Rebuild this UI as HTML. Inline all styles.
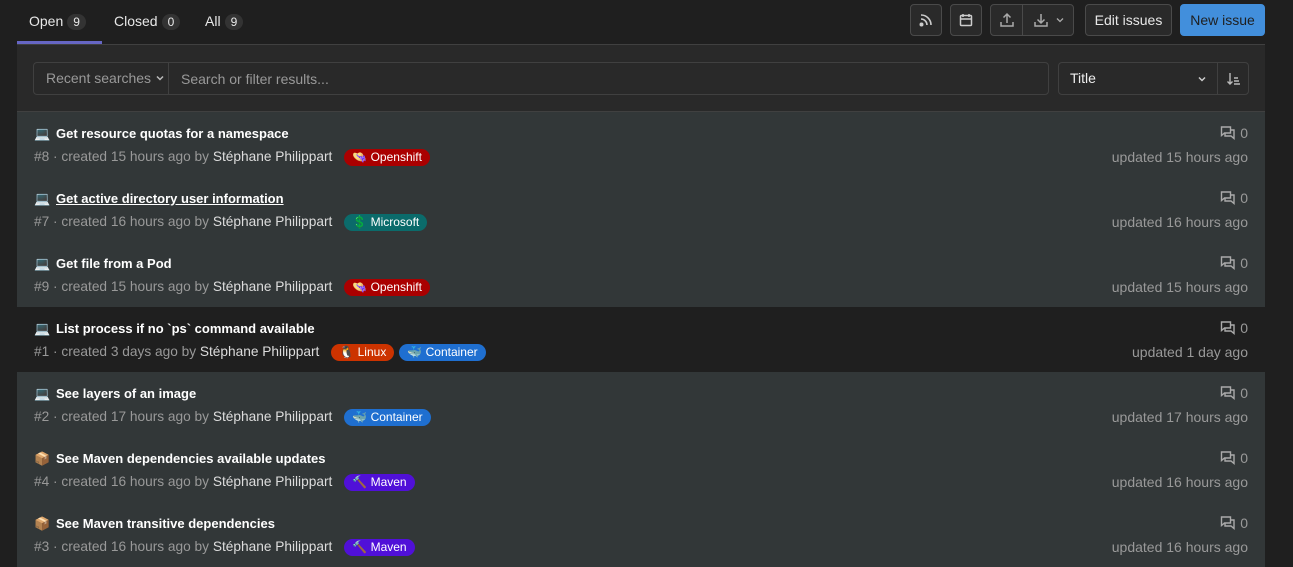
<!DOCTYPE html><html><head><meta charset="utf-8"><style>
body{margin:0;background:#1f1f1f;font-family:"Liberation Sans",sans-serif;width:1293px;height:561px;overflow:hidden;color:#fff}
.wrap{position:absolute;left:17px;width:1248px;top:0}
.tabs{height:44px;border-bottom:1px solid #404040;position:relative}
.tab{position:absolute;top:13px;font-size:14px;color:#e8e8e8}
.cnt{display:inline-block;background:#333;border-radius:10px;padding:1px 6px;font-size:12px;margin-left:4px}
.ul{position:absolute;left:0;top:41px;width:85px;height:3px;background:#6666c4}
.btn{position:absolute;top:4px;height:32px;border:1px solid #4a4a4a;border-radius:4px;background:#2a2a2a;box-sizing:border-box;display:flex;align-items:center;justify-content:center;font-size:14px;color:#e8e8e8}
.filter{height:66px;background:#292929;border-bottom:1px solid #404040;position:relative}
.fbox{position:absolute;top:17px;height:33px;border:1px solid #404040;border-radius:4px;box-sizing:border-box;font-size:14px;color:#999;display:flex;align-items:center}
.row{height:65px;background:#323738;position:relative}
.row.d{background:#1f1f1f}
.t{position:absolute;left:17px;top:14px;font-size:13px;font-weight:bold}
.t i{font-style:normal;display:inline-block;width:22px}
.m{position:absolute;left:17px;top:37px;font-size:13.7px;color:#999;white-space:nowrap}
.m b{font-weight:normal;color:#ddd}
.lb{display:inline-block;border-radius:9px;padding:1px 8px 1px 8px;font-size:12px;color:#fff;margin-left:12px;line-height:15px}
.r1{position:absolute;right:17px;top:13px;font-size:14px;color:#999;display:flex;align-items:center}
.r2{position:absolute;right:17px;top:37px;font-size:14px;color:#999}
</style></head><body><div class="wrap">
<div class="tabs">
<div class="tab" style="left:12px">Open<span class="cnt">9</span></div>
<div class="tab" style="left:97px">Closed<span class="cnt">0</span></div>
<div class="tab" style="left:188px">All<span class="cnt">9</span></div>
<div class="ul"></div>
<div class="btn" style="left:893px;width:32px"><svg width="16" height="16" viewBox="0 0 16 16" fill="none" stroke="#ccc" stroke-width="1.6"><path d="M3 3a10 10 0 0 1 10 10M3 7a6 6 0 0 1 6 6"/><circle cx="3.5" cy="12.5" r="1.2" fill="#ccc"/></svg></div>
<div class="btn" style="left:933px;width:32px"><svg width="16" height="16" viewBox="0 0 16 16" fill="none" stroke="#ccc" stroke-width="1.5"><rect x="2.5" y="3.5" width="11" height="10" rx="1"/><path d="M2.5 7h11M5 2v3M11 2v3"/></svg></div>
<div class="btn" style="left:973px;width:84px;justify-content:flex-start"><span style="width:31px;text-align:center;border-right:1px solid #4a4a4a;height:30px;display:flex;align-items:center;justify-content:center"><svg width="16" height="16" viewBox="0 0 16 16" fill="none" stroke="#aaa" stroke-width="1.5"><path d="M8 11V2M4.5 5.5 8 2l3.5 3.5M2 10v4h12v-4"/></svg></span><span style="padding-left:10px;display:flex;align-items:center"><svg width="16" height="16" viewBox="0 0 16 16" fill="none" stroke="#aaa" stroke-width="1.5"><path d="M8 2v9M4.5 7.5 8 11l3.5-3.5M2 10v4h12v-4"/></svg><svg width="10" height="10" viewBox="0 0 10 10" style="margin-left:6px" fill="none" stroke="#aaa" stroke-width="1.3"><path d="M2 3.5 5 6.5 8 3.5"/></svg></span></div>
<div class="btn" style="left:1068px;width:87px">Edit issues</div>
<div class="btn" style="left:1163px;width:85px;background:#428fdc;border-color:#428fdc;color:#1f1f1f">New issue</div>
</div>
<div class="filter">
<div class="fbox" style="left:16px;width:1016px"><span style="width:122px;padding-left:12px;border-right:1px solid #404040;height:31px;line-height:31px">Recent searches <svg width="10" height="10" viewBox="0 0 10 10" fill="none" stroke="#bbb" stroke-width="1.5"><path d="M2 3.5 5 6.5 8 3.5"/></svg></span><span style="padding-left:12px">Search or filter results...</span></div>
<div class="fbox" style="left:1041px;width:191px;color:#eee"><span style="padding-left:11px;width:147px;border-right:1px solid #404040;height:31px;line-height:31px;position:relative">Title<svg style="position:absolute;right:10px;top:11px" width="10" height="10" viewBox="0 0 10 10" fill="none" stroke="#ccc" stroke-width="1.5"><path d="M2 3.5 5 6.5 8 3.5"/></svg></span><svg style="margin-left:8px" width="16" height="16" viewBox="0 0 16 16" fill="none" stroke="#bbb" stroke-width="1.4"><path d="M4 2v11M1.5 10.5 4 13l2.5-2.5M8 7h4M8 10h5M8 13h6"/></svg></div>
</div>
<div class="row"><div class="t"><i>💻</i>Get resource quotas for a namespace</div><div class="m">#8 · created 15 hours ago by <b>Stéphane Philippart</b><span class="lb" style="background:#a00">👒 Openshift</span></div><div class="r1"><svg width="16" height="16" viewBox="0 0 16 16" fill="none" stroke="#aaa" stroke-width="1.4"><path d="M1.5 2h9v6h-6l-3 2.5z"/><path d="M5 8v3h6l3 2.5V5h-3.5"/></svg>&nbsp;0</div><div class="r2">updated 15 hours ago</div></div>
<div class="row"><div class="t" style="text-decoration:underline"><i>💻</i>Get active directory user information</div><div class="m">#7 · created 16 hours ago by <b>Stéphane Philippart</b><span class="lb" style="background:#0b6b6b">💲 Microsoft</span></div><div class="r1"><svg width="16" height="16" viewBox="0 0 16 16" fill="none" stroke="#aaa" stroke-width="1.4"><path d="M1.5 2h9v6h-6l-3 2.5z"/><path d="M5 8v3h6l3 2.5V5h-3.5"/></svg>&nbsp;0</div><div class="r2">updated 16 hours ago</div></div>
<div class="row"><div class="t"><i>💻</i>Get file from a Pod</div><div class="m">#9 · created 15 hours ago by <b>Stéphane Philippart</b><span class="lb" style="background:#a00">👒 Openshift</span></div><div class="r1"><svg width="16" height="16" viewBox="0 0 16 16" fill="none" stroke="#aaa" stroke-width="1.4"><path d="M1.5 2h9v6h-6l-3 2.5z"/><path d="M5 8v3h6l3 2.5V5h-3.5"/></svg>&nbsp;0</div><div class="r2">updated 15 hours ago</div></div>
<div class="row d"><div class="t"><i>💻</i>List process if no `ps` command available</div><div class="m">#1 · created 3 days ago by <b>Stéphane Philippart</b><span class="lb" style="background:#cc3300">🐧 Linux</span><span class="lb" style="background:#1f6fd0;margin-left:5px">🐳 Container</span></div><div class="r1"><svg width="16" height="16" viewBox="0 0 16 16" fill="none" stroke="#aaa" stroke-width="1.4"><path d="M1.5 2h9v6h-6l-3 2.5z"/><path d="M5 8v3h6l3 2.5V5h-3.5"/></svg>&nbsp;0</div><div class="r2">updated 1 day ago</div></div>
<div class="row"><div class="t"><i>💻</i>See layers of an image</div><div class="m">#2 · created 17 hours ago by <b>Stéphane Philippart</b><span class="lb" style="background:#1f6fd0">🐳 Container</span></div><div class="r1"><svg width="16" height="16" viewBox="0 0 16 16" fill="none" stroke="#aaa" stroke-width="1.4"><path d="M1.5 2h9v6h-6l-3 2.5z"/><path d="M5 8v3h6l3 2.5V5h-3.5"/></svg>&nbsp;0</div><div class="r2">updated 17 hours ago</div></div>
<div class="row"><div class="t"><i>📦</i>See Maven dependencies available updates</div><div class="m">#4 · created 16 hours ago by <b>Stéphane Philippart</b><span class="lb" style="background:#5010d8">🔨 Maven</span></div><div class="r1"><svg width="16" height="16" viewBox="0 0 16 16" fill="none" stroke="#aaa" stroke-width="1.4"><path d="M1.5 2h9v6h-6l-3 2.5z"/><path d="M5 8v3h6l3 2.5V5h-3.5"/></svg>&nbsp;0</div><div class="r2">updated 16 hours ago</div></div>
<div class="row"><div class="t"><i>📦</i>See Maven transitive dependencies</div><div class="m">#3 · created 16 hours ago by <b>Stéphane Philippart</b><span class="lb" style="background:#5010d8">🔨 Maven</span></div><div class="r1"><svg width="16" height="16" viewBox="0 0 16 16" fill="none" stroke="#aaa" stroke-width="1.4"><path d="M1.5 2h9v6h-6l-3 2.5z"/><path d="M5 8v3h6l3 2.5V5h-3.5"/></svg>&nbsp;0</div><div class="r2">updated 16 hours ago</div></div>
</div></body></html>
